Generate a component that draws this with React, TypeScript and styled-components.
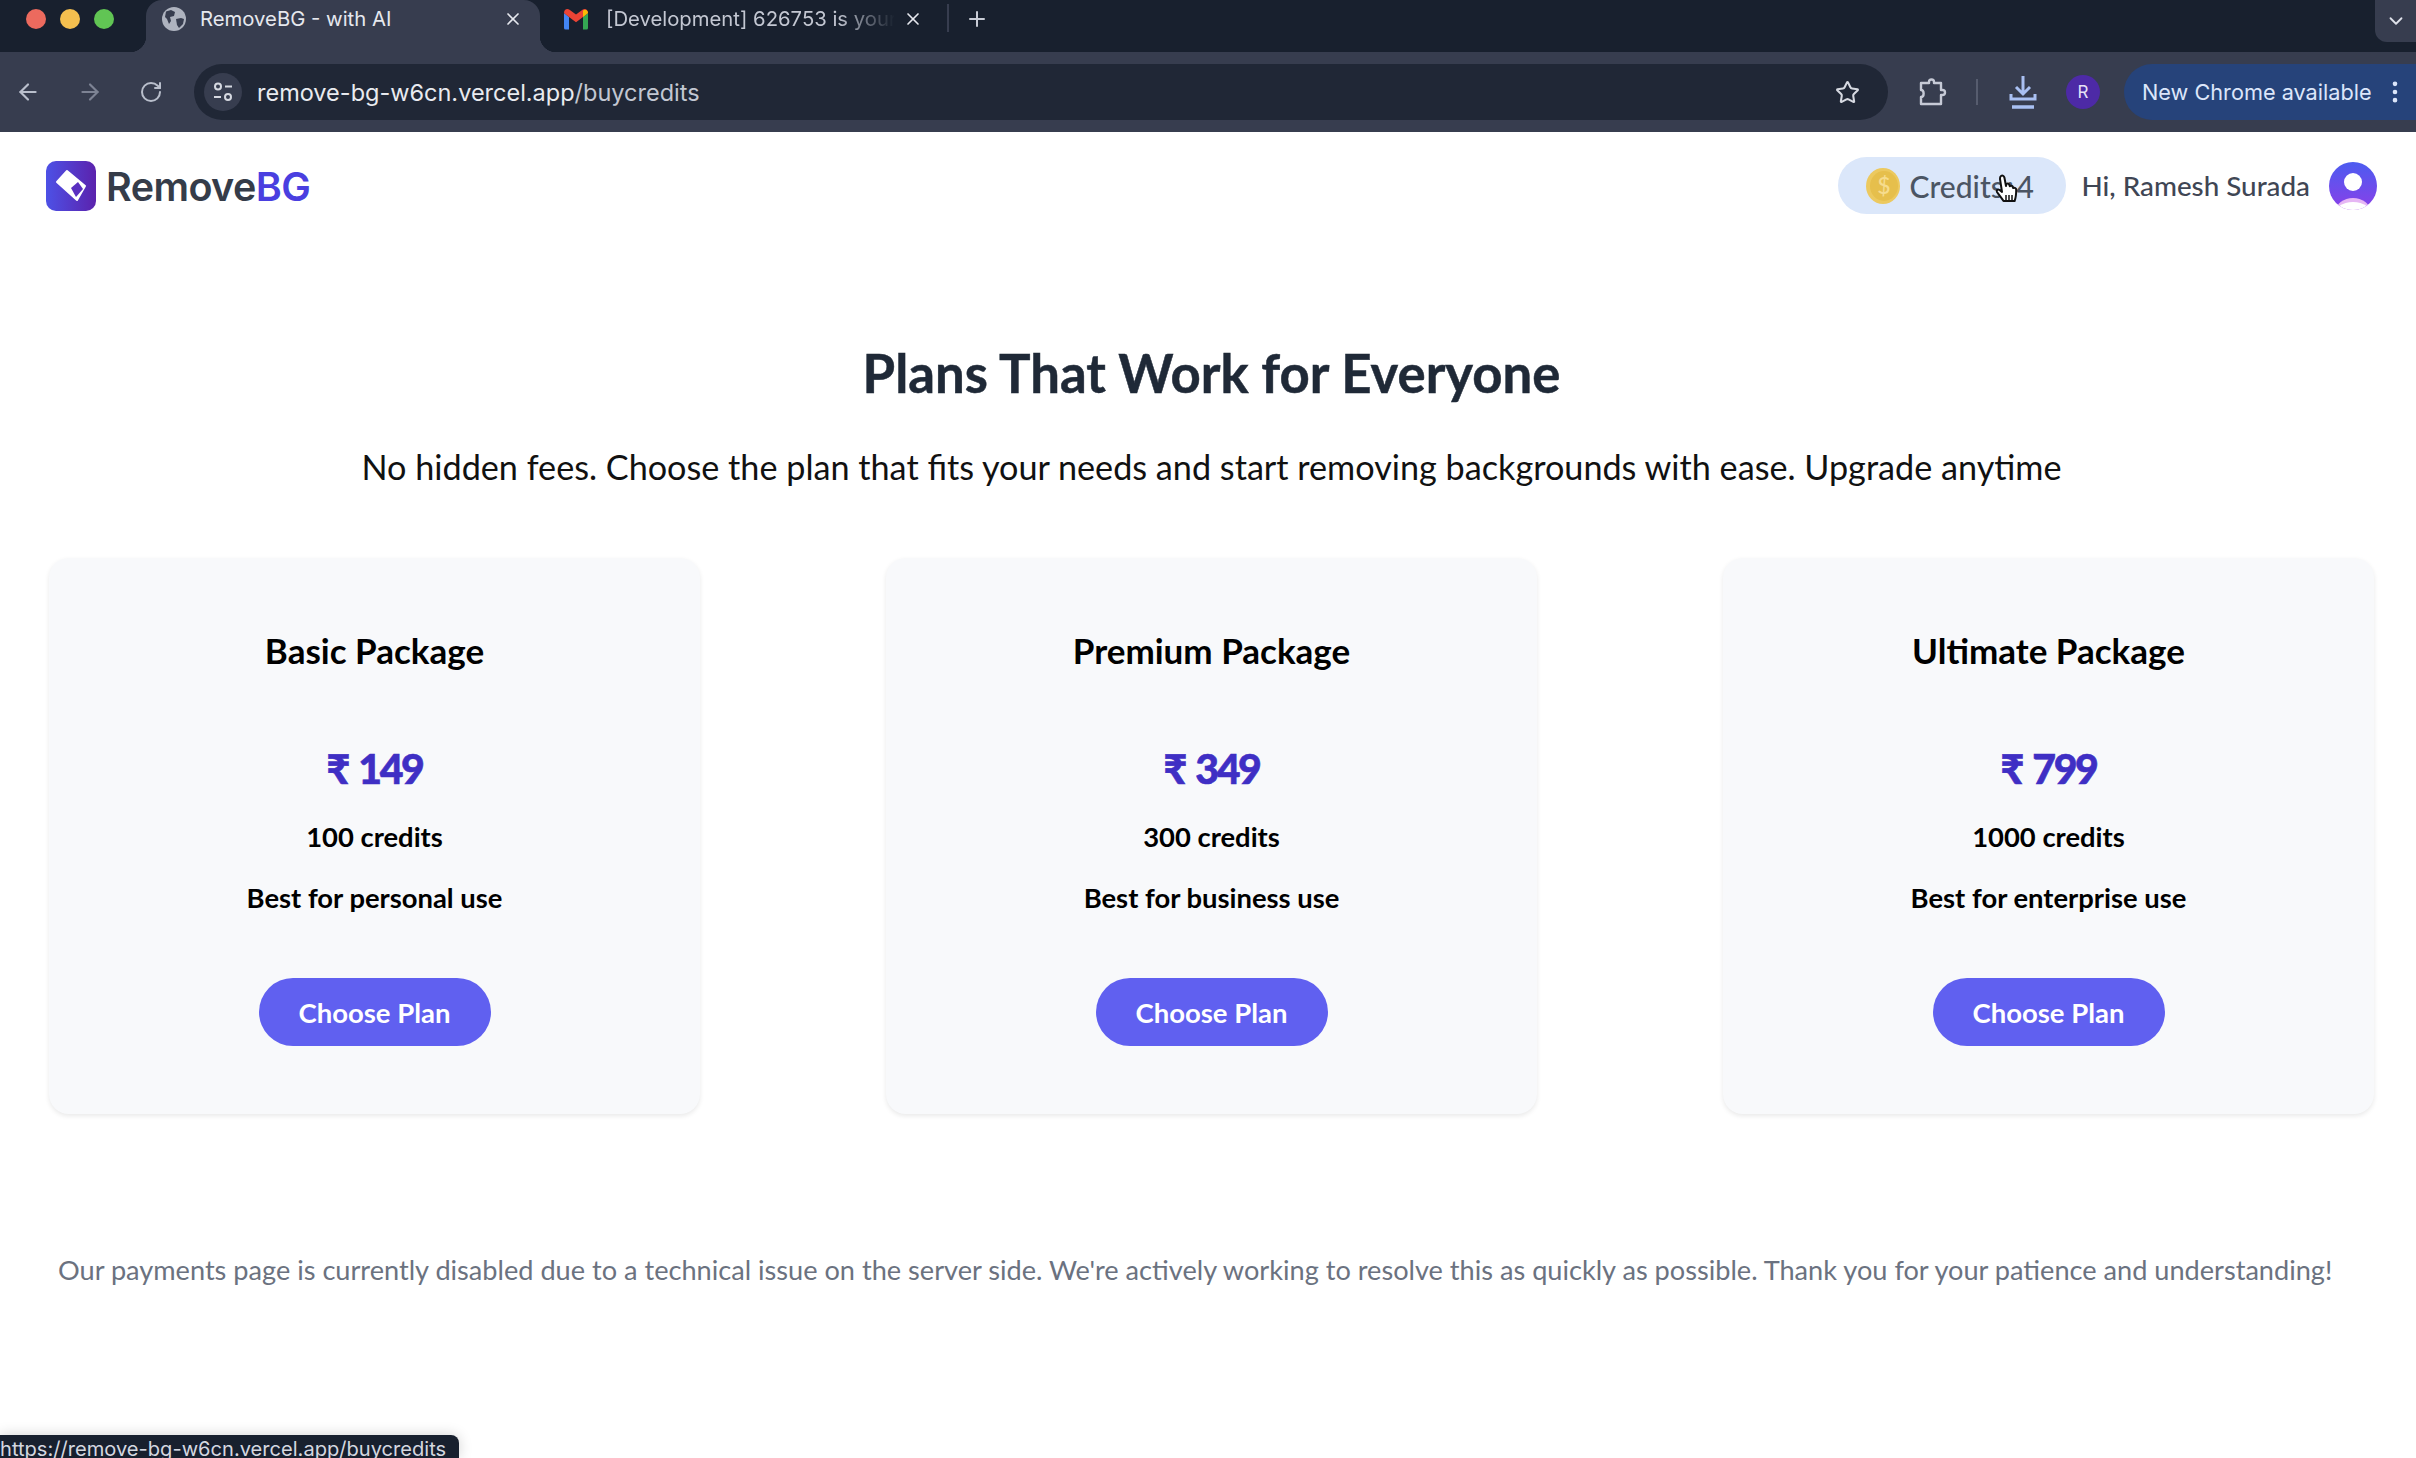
import React from "react"
import styled, { createGlobalStyle } from "styled-components"
import { ArrowLeft, ArrowRight, ChevronDown, MoreVertical, Plus, RotateCw, Star, X } from "lucide-react"

interface Plan {
  name: string
  price: string
  credits: string
  note: string
}

const plans: Plan[] = [
  { name: "Basic Package", price: "₹ 149", credits: "100 credits", note: "Best for personal use" },
  { name: "Premium Package", price: "₹ 349", credits: "300 credits", note: "Best for business use" },
  { name: "Ultimate Package", price: "₹ 799", credits: "1000 credits", note: "Best for enterprise use" },
]

const GlobalStyle = createGlobalStyle`
  html, body {
    margin: 0;
    background: #fff;
    font-family: "Lato", "Noto Sans", sans-serif;
  }
  * {
    box-sizing: border-box;
  }
`

const Screen = styled.div`
  position: relative;
  width: 2416px;
  height: 1458px;
  overflow: hidden;
  background: #fff;
`

const TabStrip = styled.div`
  display: flex;
  align-items: stretch;
  height: 52px;
  background: #18202e;
  font-family: "Inter", sans-serif;
`

const WindowButtons = styled.div`
  display: flex;
  align-items: center;
  gap: 14px;
  width: 146px;
  padding: 0 0 15px 26px;
`

const Light = styled.span<{ $color: string }>`
  width: 20px;
  height: 20px;
  border-radius: 50%;
  background: ${(p) => p.$color};
`

const ActiveTab = styled.div`
  position: relative;
  display: flex;
  align-items: center;
  width: 394px;
  padding: 0 0 15px 16px;
  background: #373d4f;
  border-radius: 16px 16px 0 0;
  color: #e6e8ee;
  font-size: 20.3px;

  &::before,
  &::after {
    content: "";
    position: absolute;
    bottom: 0;
    width: 16px;
    height: 16px;
  }
  &::before {
    left: -16px;
    background: radial-gradient(circle at 0 0, transparent 16px, #373d4f 16.5px);
  }
  &::after {
    right: -16px;
    background: radial-gradient(circle at 100% 0, transparent 16px, #373d4f 16.5px);
  }
`

const TabTitle = styled.span`
  flex: 1;
  margin-left: 14px;
  white-space: nowrap;
  overflow: hidden;
`

const FadedTitle = styled(TabTitle)`
  margin-left: 17px;
  color: #c3c7d2;
  -webkit-mask-image: linear-gradient(90deg, #000 80%, transparent 100%);
  mask-image: linear-gradient(90deg, #000 80%, transparent 100%);
`

const TabClose = styled(X)`
  flex: none;
  margin: 0 17px 0 8px;
  color: #e6e8ee;
`

const InactiveTab = styled.div`
  display: flex;
  align-items: center;
  width: 400px;
  padding: 0 0 15px 23px;
  font-size: 20.3px;
`

const TabDivider = styled.span`
  width: 2px;
  height: 28px;
  margin: 4px 0 0 7px;
  background: #373d4f;
`

const NewTab = styled.div`
  display: flex;
  align-items: center;
  padding: 0 0 15px 16px;
  color: #c8ccd6;
`

const TabSearch = styled.div`
  display: flex;
  align-items: center;
  justify-content: center;
  width: 41px;
  height: 42px;
  margin-left: auto;
  background: #373d4f;
  border-radius: 0 0 0 12px;
  color: #dfe2ea;
`

const Toolbar = styled.div`
  display: flex;
  align-items: center;
  height: 80px;
  padding-left: 15px;
  background: #373d4f;
  font-family: "Inter", sans-serif;
`

const NavButtons = styled.div`
  display: flex;
  align-items: center;
  gap: 36px;
  width: 179px;
  color: #b9bfcc;
`

const DimArrow = styled(ArrowRight)`
  color: #7d8394;
`

const Omnibox = styled.div`
  display: flex;
  align-items: center;
  width: 1694px;
  height: 56px;
  padding: 0 28px 0 10px;
  border-radius: 28px;
  background: #202736;
`

const SiteChip = styled.span`
  display: flex;
  align-items: center;
  justify-content: center;
  width: 38px;
  height: 38px;
  border-radius: 50%;
  background: #373d4f;
  color: #d6d9e1;
`

const Url = styled.span`
  flex: 1;
  margin-left: 15px;
  color: #e9ebf0;
  font-size: 23.5px;
`

const UrlPath = styled.span`
  color: #c3c7d2;
`

const ToolIcons = styled.div`
  display: flex;
  align-items: center;
  flex: 1;
  padding-left: 30px;
  color: #c6cad6;
`

const Separator = styled.span`
  width: 2px;
  height: 26px;
  margin: 0 31px 0 29px;
  background: #565c6e;
`

const ProfileDot = styled.span`
  display: flex;
  align-items: center;
  justify-content: center;
  width: 34px;
  height: 34px;
  margin-left: 29px;
  border-radius: 50%;
  background: #4d2aa6;
  color: #e6e2f6;
  font-size: 17px;
`

const UpdatePill = styled.div`
  display: flex;
  align-items: center;
  justify-content: space-between;
  flex: 1;
  height: 56px;
  margin-left: 24px;
  padding: 0 7px 0 18px;
  border-radius: 28px 0 0 28px;
  background: #26437a;
  color: #dce6fa;
  font-size: 21.7px;
  white-space: nowrap;
`

const Nav = styled.div`
  display: flex;
  align-items: center;
  justify-content: space-between;
  padding: 25px 39px 0 46px;
`

const Brand = styled.div`
  display: flex;
  align-items: center;
  gap: 10px;
  font-family: "Inter", sans-serif;
  font-size: 39.5px;
  font-weight: 600;
  letter-spacing: -0.6px;
  color: #353c49;
`

const BrandName = styled.span`
  padding-top: 2px;
`

const BrandAccent = styled.span`
  color: #4a3fe0;
`

const Account = styled.div`
  display: flex;
  align-items: center;
`

const CreditsPill = styled.div`
  position: relative;
  display: flex;
  align-items: center;
  gap: 9px;
  width: 228px;
  height: 57px;
  padding-left: 28px;
  border-radius: 29px;
  background: #dbe7fa;
  color: #4b5563;
  font-size: 30px;
  font-weight: 500;
  word-spacing: -5px;
`

const Cursor = styled.svg`
  position: absolute;
  left: 157px;
  top: 17px;
`

const Greeting = styled.span`
  margin: 0 19px 0 15px;
  color: #3f4654;
  font-size: 27.8px;
  font-weight: 500;
`

const Main = styled.main`
  display: flex;
  flex-direction: column;
  align-items: center;
  padding: 0 42px 0 49px;
`

const Heading = styled.h1`
  margin: 127px 0 0;
  color: #1f2937;
  font-size: 52.7px;
  line-height: 64px;
  font-weight: 700;
  -webkit-text-stroke: 0.5px #1f2937;
`

const Subheading = styled.p`
  margin: 40px 0 0;
  color: #111;
  font-size: 34.2px;
  line-height: 44px;
  white-space: nowrap;
`

const PlanGrid = styled.div`
  display: grid;
  grid-template-columns: repeat(3, 1fr);
  gap: 186px;
  width: 100%;
  margin-top: 69px;
`

const Card = styled.div`
  display: flex;
  flex-direction: column;
  align-items: center;
  padding: 70px 0 68px;
  border-radius: 20px;
  background: #f8f9fb;
  box-shadow: 0 2px 5px rgba(0, 0, 0, 0.09);
`

const PlanName = styled.h2`
  margin: 0;
  color: #000;
  font-size: 35px;
  line-height: 44px;
  font-weight: 700;
`

const Price = styled.div`
  margin-top: 72px;
  color: #3f2fc4;
  font-size: 41px;
  line-height: 50px;
  font-weight: 900;
  letter-spacing: -2.4px;
  word-spacing: 3px;
  -webkit-text-stroke: 0.6px #3f2fc4;
`

const PlanLine = styled.p`
  margin: 25px 0 0;
  color: #000;
  font-size: 27.4px;
  line-height: 36px;
  font-weight: 700;
`

const ChooseButton = styled.button`
  width: 232px;
  height: 68px;
  margin-top: 62px;
  border: none;
  border-radius: 34px;
  background: #6060f0;
  color: #fff;
  font-family: inherit;
  font-size: 27.5px;
  font-weight: 700;
`

const Notice = styled.p`
  align-self: flex-start;
  margin: 137px 0 0 9px;
  color: #6b7280;
  font-size: 27.15px;
  line-height: 38px;
  white-space: nowrap;
`

const StatusBubble = styled.div`
  position: absolute;
  left: 0;
  bottom: 0;
  width: 459px;
  height: 23px;
  padding: 2px 0 0 0;
  overflow: hidden;
  border-radius: 0 8px 0 0;
  background: #18202e;
  box-shadow: 0 0 14px rgba(0, 0, 0, 0.18);
  color: #d5d8e0;
  font-family: "Inter", sans-serif;
  font-size: 20.1px;
  line-height: 24px;
  white-space: nowrap;
`

const GlobeFavicon = () => (
  <svg width="24" height="24" viewBox="0 0 24 24">
    <circle cx="12" cy="12" r="12" fill="#aeb3bf" />
    <path d="M4 4.500 9 3l4 2-1 4-4 1 1 4-2 3-2-5-2-2z" fill="#373d4f" />
    <path d="M14 12l5-1 3 1-1 5-4 4-2-3z" fill="#373d4f" />
  </svg>
)

const GmailIcon = () => (
  <svg width="26" height="22" viewBox="0 0 26 22">
    <path d="M1 5v15a1.5 1.5 0 0 0 1.5 1.500H6V9z" fill="#4285f4" />
    <path d="M25 5v15a1.5 1.5 0 0 1-1.500 1.500H20V9z" fill="#34a853" />
    <path d="M6 9 1 5c0-3.500 3-5 5.500-3.300L13 6.500l6.500-4.800C22 0 25 1.500 25 5l-5 4-7 5.300z" fill="#ea4335" />
    <path d="M20 9V2.600c2.500-1.800 5-.1 5 2.400z" fill="#fbbc04" />
  </svg>
)

const SiteControls = () => (
  <svg width="22" height="22" viewBox="0 0 22 22" fill="none" stroke="currentColor" strokeWidth="2">
    <circle cx="6" cy="5.500" r="3" />
    <path d="M13 5.500h7M2 16h7" />
    <circle cx="16" cy="16" r="3" />
  </svg>
)

const ExtensionIcon = () => (
  <svg width="29" height="29" viewBox="0 0 29 29" fill="none" stroke="currentColor" strokeWidth="2.400" strokeLinejoin="round">
    <path d="M3 5h8V4a2.500 2.500 0 0 1 5 0v1h7v7h1.500a2.500 2.500 0 0 1 0 5H23v9H3v-7c3.500 0 3.500-7 0-7z" />
  </svg>
)

const DownloadIcon = () => (
  <svg width="28" height="36" viewBox="0 0 28 36" fill="none" stroke="#a9c0f2" strokeWidth="3">
    <path d="M14 2v17M7 13l7 7 7-7" />
    <path d="M2 20v5h24v-5" />
    <path d="M3 33h22" strokeWidth="3.500" />
  </svg>
)

const LogoMark = () => (
  <svg width="50" height="50" viewBox="0 0 50 50">
    <defs>
      <linearGradient id="logoFill" x1="0" y1="0" x2="1" y2="0">
        <stop offset="0" stopColor="#4d51e6" />
        <stop offset="1" stopColor="#5b22ad" />
      </linearGradient>
    </defs>
    <rect width="50" height="50" rx="10" fill="url(#logoFill)" />
    <path d="M11 21 21 10l18 15-8 14z" fill="#fff" stroke="#fff" strokeWidth="2" strokeLinejoin="round" />
    <path d="M25 27l7-6 5 7-7 8z" fill="#5a2fc0" />
  </svg>
)

const Coin = () => (
  <svg width="34" height="36" viewBox="0 0 34 36">
    <ellipse cx="17" cy="18" rx="17" ry="18" fill="#ecc95f" />
    <ellipse cx="18" cy="18" rx="14" ry="15" fill="#e6bf4c" />
    <text x="18" y="26" textAnchor="middle" fontSize="23" fontFamily="Lato, sans-serif" fill="#f6dc8e">
      $
    </text>
  </svg>
)

const HandCursor = () => (
  <Cursor width="26" height="32" viewBox="0 0 26 32">
    <path
      d="M6 2c1.600-1 3 0 3.400 1.500L11 12l.4-2c1.500-1 3 0 3 1.200l.4 1c1.300-1 2.800-.4 3 1l.4.800c1.500-.6 3 .2 3 1.800 0 4-.3 8-1.600 11.200H8.500C7 24.500 4.400 21.500 2 18c-.8-1.500.6-3 2.200-2.200L7 18 5 5c-.1-1.300.2-2.400 1-3z"
      fill="#fff"
      stroke="#111"
      strokeWidth="2"
      strokeLinejoin="round"
    />
    <path d="M11 21v5M14 21v5M17 21v5" stroke="#111" strokeWidth="1.500" />
  </Cursor>
)

const AvatarIcon = () => (
  <svg width="48" height="48" viewBox="0 0 48 48">
    <defs>
      <linearGradient id="avatarFill" x1="0" y1="0" x2="0" y2="1">
        <stop offset="0" stopColor="#4c5cf0" />
        <stop offset="1" stopColor="#8a3fe8" />
      </linearGradient>
      <clipPath id="avatarClip">
        <circle cx="24" cy="24" r="24" />
      </clipPath>
    </defs>
    <circle cx="24" cy="24" r="24" fill="url(#avatarFill)" />
    <circle cx="24" cy="20" r="9" fill="#fff" />
    <g clipPath="url(#avatarClip)">
      <ellipse cx="24" cy="49" rx="17" ry="13" fill="#e6b6f4" />
      <ellipse cx="24" cy="53" rx="19" ry="13" fill="#fff" />
    </g>
  </svg>
)

const App: React.FC = () => {
  return (
    <Screen>
      <GlobalStyle />
      <TabStrip>
        <WindowButtons>
          <Light $color="#ec6a5e" />
          <Light $color="#f4bf4f" />
          <Light $color="#61c554" />
        </WindowButtons>
        <ActiveTab>
          <GlobeFavicon />
          <TabTitle>RemoveBG - with AI</TabTitle>
          <TabClose size={20} />
        </ActiveTab>
        <InactiveTab>
          <GmailIcon />
          <FadedTitle>[Development] 626753 is your</FadedTitle>
          <TabClose size={20} />
        </InactiveTab>
        <TabDivider />
        <NewTab>
          <Plus size={24} />
        </NewTab>
        <TabSearch>
          <ChevronDown size={22} />
        </TabSearch>
      </TabStrip>
      <Toolbar>
        <NavButtons>
          <ArrowLeft size={26} />
          <DimArrow size={26} />
          <RotateCw size={24} />
        </NavButtons>
        <Omnibox>
          <SiteChip>
            <SiteControls />
          </SiteChip>
          <Url>
            remove-bg-w6cn.vercel.app<UrlPath>/buycredits</UrlPath>
          </Url>
          <Star size={25} color="#d6d9e1" />
        </Omnibox>
        <ToolIcons>
          <ExtensionIcon />
          <Separator />
          <DownloadIcon />
          <ProfileDot>R</ProfileDot>
          <UpdatePill>
            New Chrome available
            <MoreVertical size={28} />
          </UpdatePill>
        </ToolIcons>
      </Toolbar>
      <Nav>
        <Brand>
          <LogoMark />
          <BrandName>
            Remove<BrandAccent>BG</BrandAccent>
          </BrandName>
        </Brand>
        <Account>
          <CreditsPill>
            <Coin />
            Credits : 4
            <HandCursor />
          </CreditsPill>
          <Greeting>Hi, Ramesh Surada</Greeting>
          <AvatarIcon />
        </Account>
      </Nav>
      <Main>
        <Heading>Plans That Work for Everyone</Heading>
        <Subheading>
          No hidden fees. Choose the plan that fits your needs and start removing backgrounds with ease. Upgrade anytime
        </Subheading>
        <PlanGrid>
          {plans.map((plan) => (
            <Card key={plan.name}>
              <PlanName>{plan.name}</PlanName>
              <Price>{plan.price}</Price>
              <PlanLine>{plan.credits}</PlanLine>
              <PlanLine>{plan.note}</PlanLine>
              <ChooseButton>Choose Plan</ChooseButton>
            </Card>
          ))}
        </PlanGrid>
        <Notice>
          Our payments page is currently disabled due to a technical issue on the server side. We're actively working to
          resolve this as quickly as possible. Thank you for your patience and understanding!
        </Notice>
      </Main>
      <StatusBubble>https://remove-bg-w6cn.vercel.app/buycredits</StatusBubble>
    </Screen>
  )
}

export default App
